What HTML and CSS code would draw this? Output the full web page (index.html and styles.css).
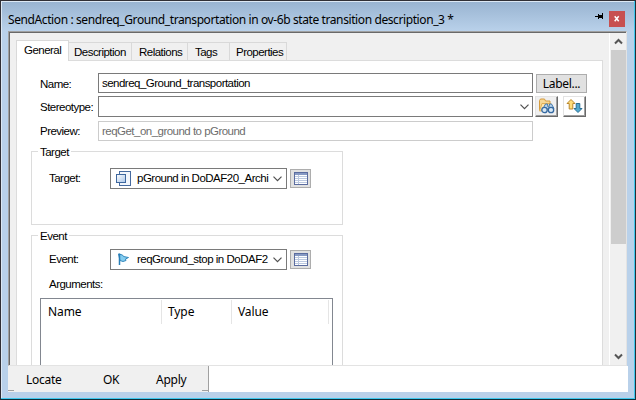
FILE: index.html
```html
<!DOCTYPE html>
<html lang="en">
<head>
<meta charset="utf-8">
<title>SendAction</title>
<link rel="stylesheet" href="styles.css">
</head>
<body>
<div class="window">
  <header class="titlebar">
    <h1 class="title">SendAction : sendreq_Ground_transportation in ov-6b state transition description_3 *</h1>
    <svg class="pin" width="8" height="7" viewBox="0 0 8 7" shape-rendering="crispEdges"><path d="M0 3h3V1h1v1h3V0h1v6H7V5H4v1H3V4H0z" fill="#000"/></svg>
    <button class="close"><svg width="16" height="16" viewBox="0 0 16 16"><path d="M5.700 5.200l4 5M9.700 5.200l-4 5" stroke="#fff" stroke-width="1.500"/></svg></button>
  </header>
  <main class="client">
    <div class="page">
      <nav class="tabs">
        <span class="tab active">General</span>
        <span class="tab t-desc">Description</span>
        <span class="tab t-rel">Relations</span>
        <span class="tab t-tags">Tags</span>
        <span class="tab t-prop">Properties</span>
      </nav>
      <section class="panel">
        <div class="row r-name"><label>Name:</label><div class="field">sendreq_Ground_transportation</div><button class="label-btn">Label...</button></div>
        <div class="row r-stereo"><label class="w-stereo">Stereotype:</label><div class="field combo"><svg class="chev" width="9" height="6" viewBox="0 0 9 6"><path d="M.5.7l4 4 4-4" fill="none" stroke="#505050" stroke-width="1.2"/></svg></div>
          <button class="raised grey"><svg width="17" height="17" viewBox="0 0 17 17">
            <path d="M1.500 12V2.500L2.500 1h4l1 2h4.500v4" fill="#f6d795" stroke="#d59b3e"/><path d="M1.500 13L4 5.500h9L11.500 12z" fill="#ffe7af" stroke="#dfae56"/>
            <path d="M5 10.500L7.500 6h2l.5 3h1l.5-3h2l2.500 4.500" fill="#b8d4ec" stroke="#4378ad"/><circle cx="6.500" cy="12" r="2.700" fill="#d7e8f5" stroke="#3569a1" stroke-width="1.300"/><circle cx="13" cy="12" r="2.700" fill="#d7e8f5" stroke="#3569a1" stroke-width="1.300"/><path d="M9 11h1.500" stroke="#3569a1"/></svg></button>
          <button class="raised second"><svg width="17" height="17" viewBox="0 0 17 17"><path d="M5 1.500l4 4H6.800V11H3.200V5.500H1z" fill="#ffdd79" stroke="#b9872e"/><path d="M10.200 5.500h3.600v5H16l-4 4-4-4h2.200z" fill="#51a8ce" stroke="#286e94"/></svg></button></div>
        <div class="row r-preview"><label class="w-preview">Preview:</label><div class="field readonly">reqGet_on_ground to pGround</div></div>

        <fieldset class="group target"><legend>Target</legend>
          <div class="grow"><label>Target:</label><div class="combo small">
            <svg class="ico" width="16" height="16" viewBox="0 0 16 16"><defs><linearGradient id="sq" x1="0" y1="0" x2="1" y2="1"><stop stop-color="#fff"/><stop offset="1" stop-color="#a9c5e8"/></linearGradient></defs><rect x="3.500" y=".5" width="11" height="14" fill="#f2f6fc" stroke="#466a9f"/><rect x=".5" y="3.500" width="9" height="8" fill="url(#sq)" stroke="#3e679e"/></svg>
            <span class="value">pGround in DoDAF20_Archi</span><svg class="chev" width="9" height="6" viewBox="0 0 9 6"><path d="M.5.7l4 4 4-4" fill="none" stroke="#505050" stroke-width="1.2"/></svg></div>
            <button class="list-btn"><svg width="14" height="13" viewBox="0 0 14 13" shape-rendering="crispEdges"><path fill="#fff" d="M0 0h14v13H0z"/><path fill="#8699c3" d="M0 0h14v3H0z"/><path d="M1 4.500h12M1 6.500h12M1 8.500h12M1 10.500h12M4.500 3v9" stroke="#bcc9e0"/><path d="M.5.5h13v12H.5z" fill="none" stroke="#5b6c9f"/></svg></button></div>
        </fieldset>

        <fieldset class="group event"><legend>Event</legend>
          <div class="grow"><label class="w-event">Event:</label><div class="combo small">
            <svg class="ico" width="16" height="16" viewBox="0 0 16 16"><path d="M2.500 2l4 1 1 1.500 5 1-3 1.500.5 1.500-3 1-3-1z" fill="#84cdf0" stroke="#3488bc"/><path d="M3.500 1.500v11.500" stroke="#287eb7" stroke-width="1.500"/></svg>
            <span class="value v-event">reqGround_stop in DoDAF2</span><svg class="chev" width="9" height="6" viewBox="0 0 9 6"><path d="M.5.7l4 4 4-4" fill="none" stroke="#505050" stroke-width="1.2"/></svg></div>
            <button class="list-btn"><svg width="14" height="13" viewBox="0 0 14 13" shape-rendering="crispEdges"><path fill="#fff" d="M0 0h14v13H0z"/><path fill="#8699c3" d="M0 0h14v3H0z"/><path d="M1 4.500h12M1 6.500h12M1 8.500h12M1 10.500h12M4.500 3v9" stroke="#bcc9e0"/><path d="M.5.5h13v12H.5z" fill="none" stroke="#5b6c9f"/></svg></button></div>
          <div class="arguments">Arguments:</div>
          <div class="table"><div class="thead"><span>Name</span><span>Type</span><span>Value</span></div></div>
        </fieldset>
      </section>
    </div>
    <div class="scrollbar">
      <svg width="15" height="17" viewBox="0 0 15 17"><path d="M4 10.500l3.500-3.500 3.500 3.500" fill="none" stroke="#555" stroke-width="2"/></svg>
      <div class="thumb"></div>
      <svg class="down" width="15" height="17" viewBox="0 0 15 17"><path d="M4 6.500L7.500 10 11 6.500" fill="none" stroke="#555" stroke-width="2"/></svg>
    </div>
  </main>
  <footer class="footer"><div class="actions"><span class="locate">Locate</span><span class="ok">OK</span><span class="apply">Apply</span></div></footer>
</div>
</body>
</html>
```
FILE: styles.css
```css
* { box-sizing: border-box; }
body { margin: 0; width: 636px; height: 400px; overflow: hidden; color: #000; font: 11.5px/14px "Liberation Sans", sans-serif; letter-spacing: -.52px; }
button { padding: 0; margin: 0; font: inherit; color: inherit; letter-spacing: inherit; }
svg { display: block; flex: none; }
.window { width: 636px; height: 400px; display: flex; flex-direction: column; border: 1px solid #302f35; border-right-color: #252e36; border-bottom-color: #10303a; background: #b9d1ea; box-shadow: inset -1px -1px #3fc8ee, inset 1px 1px #dce8f4; padding: 1px 7px 7px; }
.titlebar { height: 29px; display: flex; align-items: flex-start; margin: 0 -6px; padding: 0 9px 0 6px; background: linear-gradient(#99b4d1, #b9d1ea); }
.title { margin: 10px 0 0; flex: 1; font: 12px/16px "Noto Sans", sans-serif; letter-spacing: -.4px; white-space: nowrap; }
.pin { margin: 11px 6px 0 0; }
.close { width: 16px; height: 16px; margin-top: 9px; border: 0; background: #c75050; }
.client { height: 335px; display: flex; border: 1px solid #a0a0a0; border-right-color: #e3e3e3; border-bottom-color: #e3e3e3; background: #f0f0f0; box-shadow: inset 1px 1px #696969; padding: 1px 0 0 1px; overflow: hidden; flex: none; width: 619px; }
.page { width: 599px; height: 332px; padding: 7px 6px 0; overflow: hidden; }
.tabs { display: flex; align-items: flex-end; height: 20px; position: relative; }
.tab { height: 18px; border: 1px solid #d9d9d9; border-left: 0; border-bottom: 0; padding: 2px 0 0 5px; white-space: nowrap; }
.tab.active { width: 53px; height: 21px; background: #fff; border-left: 1px solid #d9d9d9; padding: 2px 0 0 7px; margin-bottom: -1px; position: relative; }
.t-desc { width: 63px; }
.t-rel { width: 56px; padding-left: 7px; }
.t-tags { width: 42px; padding-left: 7px; }
.t-prop { width: 57px; padding-left: 6px; }
.panel { width: 587px; height: 420px; border: 1px solid #dcdcdc; background: #fff; padding: 12px 0 0 14px; }
.row { display: flex; padding-left: 9px; }
.row label { width: 58px; flex: none; white-space: nowrap; padding-top: 4px; }
.field { width: 435px; flex: none; border: 1px solid #7a7a7a; background: #fff; padding: 2px 3px; white-space: nowrap; }
.r-name { height: 20px; margin-bottom: 3px; }
.label-btn { width: 51px; height: 19px; margin: 1px 0 0 3px; border: 1px solid #adadad; background: #e1e1e1; font: 12px/15px "Noto Sans", sans-serif; letter-spacing: -.3px; }
.r-stereo { height: 21px; margin-bottom: 4px; }
.combo { display: flex; align-items: center; }
.chev { margin-left: auto; }
.raised { width: 23px; height: 21px; margin-left: 2px; border: 1px solid #e3e3e3; border-right: 1px solid #696969; border-bottom: 1px solid #696969; box-shadow: inset -1px -1px #a0a0a0; background: #fff; padding: 0 0 0 2px; }
.raised.grey { background: #f0f0f0; }
.raised.second { margin-left: 5px; }
.r-preview { height: 20px; margin-bottom: 10px; }
.r-preview label { padding-top: 3px; }
.readonly { color: #6d6d6d; border-color: #ccc; }
.group { width: 312px; margin: 0; padding: 0; border: 1px solid #dcdcdc; min-width: 0; }
.group legend { height: 14px; margin: 0 0 0 6px; padding: 0 2px; line-height: 16px; }
.target { height: 81px; margin-top: -7px; }
.event { height: 200px; margin-top: 3px; }
.grow { display: flex; align-items: center; padding-left: 17px; height: 21px; margin-top: 10px; }
.grow label { width: 61px; flex: none; margin-top: -2px; }
.small { width: 177px; height: 21px; border: 1px solid #7a7a7a; padding: 0 4px 0 5px; }
.ico { margin-right: 5px; }
.value { white-space: nowrap; width: 133px; letter-spacing: -.5px; margin-top: -2px; }
.list-btn { width: 21px; height: 19px; margin-left: 3px; border: 1px solid #adadad; background: #e1e1e1; padding: 0 0 0 3px; }
.event .grow { margin-top: 7px; }
.arguments { margin: 7px 0 0 17px; }
.table { width: 293px; height: 90px; margin: 7px 0 0 8px; border: 1px solid #828790; padding-top: 1px; }
.thead { display: flex; height: 24px; font: 12px/24px "Noto Sans", sans-serif; letter-spacing: -.1px; }
.thead span { border-right: 1px solid #e5e5e5; padding-left: 7px; }
.thead span:nth-child(1) { width: 121px; }
.thead span:nth-child(2) { width: 70px; padding-left: 6px; }
.thead span:nth-child(3) { width: 97px; padding-left: 6px; }
.scrollbar { width: 17px; height: 332px; display: flex; flex-direction: column; padding-left: 1px; border-left: 1px solid #fff; }
.thumb { height: 194px; background: #cdcdcd; width: 15px; }
.down { margin-top: auto; }
.footer { height: 26px; background: #fff; flex: none; width: 620px; }
.actions { width: 201px; height: 26px; display: flex; background: linear-gradient(#a0a0a0, #a0a0a0) 0 24px / 6px 1px no-repeat, linear-gradient(#a0a0a0, #a0a0a0) 100% 24px / 6px 1px no-repeat, #f0f0f0; border-right: 1px solid #a0a0a0; font: 12px/27px "Noto Sans", sans-serif; letter-spacing: -.25px; }
.locate { width: 77px; padding-left: 18px; }
.ok { width: 53px; padding-left: 18px; }
.apply { padding-left: 18px; }
```
